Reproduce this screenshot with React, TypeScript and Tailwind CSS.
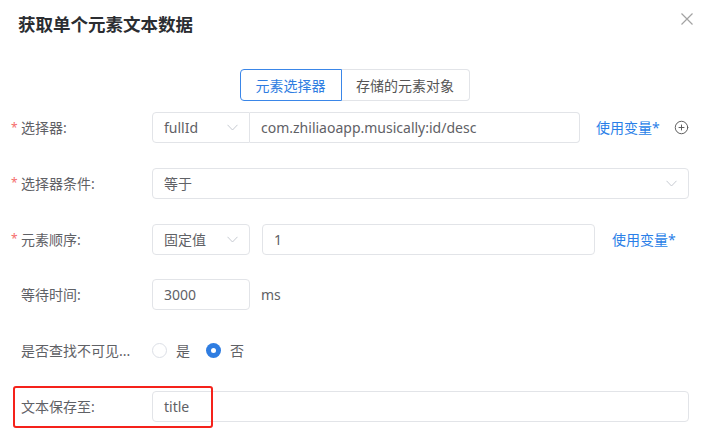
import React from 'react';
import { CirclePlus } from 'lucide-react';

const FONT = { fontFamily: '"Noto Sans", "Noto Sans CJK SC", sans-serif' };

function Chevron() {
  return (
    <svg width="11" height="7" viewBox="0 0 11 7" fill="none" className="shrink-0">
      <path d="M0.5 0.8 L5.5 6 L10.5 0.8" stroke="#c6cad1" strokeWidth="1" />
    </svg>
  );
}

function Label({ text, required }: { text: string; required?: boolean }) {
  return (
    <div className="w-[152px] shrink-0 flex items-center pl-[11px] text-[14px] text-[#5f6166]">
      <span className="w-[10px] text-[#f56c6c] text-[12px] leading-none">{required ? '*' : ''}</span>
      <span className="whitespace-nowrap">{text}</span>
    </div>
  );
}

const box = 'h-full shrink-0 border border-[#e2e4e8] rounded-[4px] flex items-center px-[11px] text-[14px] text-[#5f6166]';

function UseVar() {
  return <span className="text-[14px] text-[#2a7fe8] whitespace-nowrap">使用变量*</span>;
}

export default function App() {
  return (
    <div className="w-[709px] h-[436px] bg-white overflow-hidden relative" style={FONT}>
      <div className="h-[48px] flex items-center px-[18px]">
        <h1 className="text-[17.5px] font-semibold text-[#2b2d31]">获取单个元素文本数据</h1>
      </div>
      <button className="absolute left-[681px] top-[13px] w-[12px] h-[12px]">
        <svg width="12" height="12" viewBox="0 0 12 12">
          <path d="M0.5 0.5 L11.5 11.5 M11.5 0.5 L0.5 11.5" stroke="#a3a3a3" strokeWidth="1.2" />
        </svg>
      </button>

      <div className="mt-[21px] flex justify-center">
        <div className="flex h-[32px] text-[14px]">
          <div className="w-[102px] flex items-center justify-center border border-[#3a86e8] rounded-l-[4px] text-[#2f7de1]">
            元素选择器
          </div>
          <div className="w-[128px] flex items-center justify-center border border-l-0 border-[#e2e4e8] rounded-r-[4px] text-[#555]">
            存储的元素对象
          </div>
        </div>
      </div>

      <div className="mt-[11px] flex flex-col gap-[24.8px] pr-[20px]">
        <div className="flex h-[31px]">
          <Label text="选择器:" required />
          <div className={`${box} w-[98px] rounded-r-none justify-between`}>
            <span>fullId</span>
            <Chevron />
          </div>
          <div className={`${box} w-[330px] border-l-0 rounded-l-none`}>com.zhiliaoapp.musically:id/desc</div>
          <div className="flex items-center pl-[16px] shrink-0">
            <UseVar />
            <CirclePlus size={15} strokeWidth={1.5} color="#555" className="ml-[14px] shrink-0" />
          </div>
        </div>

        <div className="flex h-[31px]">
          <Label text="选择器条件:" required />
          <div className={`${box} flex-1 justify-between`}>
            <span>等于</span>
            <Chevron />
          </div>
        </div>

        <div className="flex h-[31px]">
          <Label text="元素顺序:" required />
          <div className={`${box} w-[98px] justify-between`}>
            <span>固定值</span>
            <Chevron />
          </div>
          <div className={`${box} w-[333px] ml-[12px]`}>1</div>
          <div className="flex items-center pl-[17px] shrink-0">
            <UseVar />
          </div>
        </div>

        <div className="flex h-[31px]">
          <Label text="等待时间:" />
          <div className={`${box} w-[98px]`}>3000</div>
          <span className="flex items-center pl-[11px] text-[14px] text-[#5f6166]">ms</span>
        </div>

        <div className="flex h-[31px]">
          <Label text="是否查找不可见..." />
          <div className="flex items-center text-[14px] text-[#5f6166]">
            <span className="w-[15px] h-[15px] rounded-full border border-[#dcdfe6] bg-white" />
            <span className="ml-[9px]">是</span>
            <span className="ml-[16px] w-[15px] h-[15px] rounded-full bg-[#2f7de1] flex items-center justify-center">
              <span className="w-[5px] h-[5px] rounded-full bg-white" />
            </span>
            <span className="ml-[9px]">否</span>
          </div>
        </div>

        <div className="flex h-[31px] relative">
          <Label text="文本保存至:" />
          <div className={`${box} flex-1`}>title</div>
          <div className="absolute left-[13px] top-[-5px] w-[200px] h-[42px] border-2 border-[#f5221b] rounded-[3px] pointer-events-none" />
        </div>
      </div>
    </div>
  );
}
